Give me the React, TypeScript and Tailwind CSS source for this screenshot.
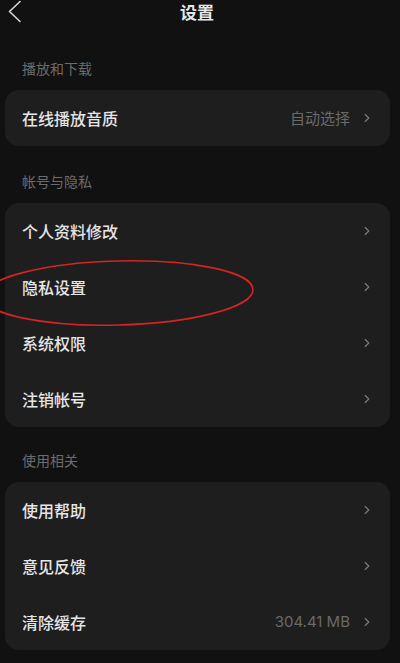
import { ChevronRight } from 'lucide-react';

interface Row {
  title: string;
  value?: string;
}

interface Section {
  label: string;
  rows: Row[];
  gap: string;
}

const sections: Section[] = [
  { label: '播放和下载', gap: 'h-[66px]', rows: [{ title: '在线播放音质', value: '自动选择' }] },
  {
    label: '帐号与隐私',
    gap: 'h-[57px]',
    rows: [{ title: '个人资料修改' }, { title: '隐私设置' }, { title: '系统权限' }, { title: '注销帐号' }],
  },
  {
    label: '使用相关',
    gap: 'h-[55px]',
    rows: [{ title: '使用帮助' }, { title: '意见反馈' }, { title: '清除缓存', value: '304.41 MB' }],
  },
];

export default function App() {
  return (
    <div
      className="relative w-[400px] h-[663px] overflow-hidden bg-[#111111]"
      style={{ fontFamily: '"Noto Sans CJK SC", "Noto Sans", sans-serif' }}
    >
      {/* Header */}
      <div className="relative h-[24px] flex items-center justify-center">
        <svg className="absolute left-0 top-0" width="28" height="24" viewBox="0 0 28 24">
          <polyline points="20,1.5 9.5,11.5 20,21.5" fill="none" stroke="#d8d8d8" strokeWidth="1.6" strokeLinecap="round" strokeLinejoin="round" />
        </svg>
        <span className="text-[17px] leading-[24px] font-bold text-[#e6e6e6] -ml-[6px]">设置</span>
      </div>

      {sections.map((section) => (
        <div key={section.label}>
          <div className={`${section.gap} flex items-end pb-[12px] pl-[22px]`}>
            <span className="text-[14px] leading-[20px] text-[#6c6c6c]">{section.label}</span>
          </div>
          <div className="ml-[5px] mr-[10px] rounded-[14px] bg-[#1e1e1e]">
            {section.rows.map((row) => (
              <div key={row.title} className="h-[56px] flex items-center pl-[17px] pr-[16px]">
                <span className="flex-1 text-[16px] font-medium text-[#e6e6e6]">{row.title}</span>
                {row.value && (
                  <span
                    className="mr-[10px] text-[15px] text-[#6a6a6a]"
                    style={row.value.includes('MB') ? { fontFamily: 'Inter, "Noto Sans", sans-serif' } : undefined}
                  >
                    {row.value}
                  </span>
                )}
                <ChevronRight className="h-[14px] w-[14px] text-[#7a7a7a]" strokeWidth={2} />
              </div>
            ))}
          </div>
        </div>
      ))}

      {/* Red annotation ellipse */}
      <svg className="pointer-events-none absolute left-0 top-0" width="400" height="663">
        <ellipse cx="118" cy="293" rx="135" ry="32" fill="none" stroke="#d42424" strokeWidth="1.6" transform="rotate(-1.5 118 293)" />
      </svg>
    </div>
  );
}
